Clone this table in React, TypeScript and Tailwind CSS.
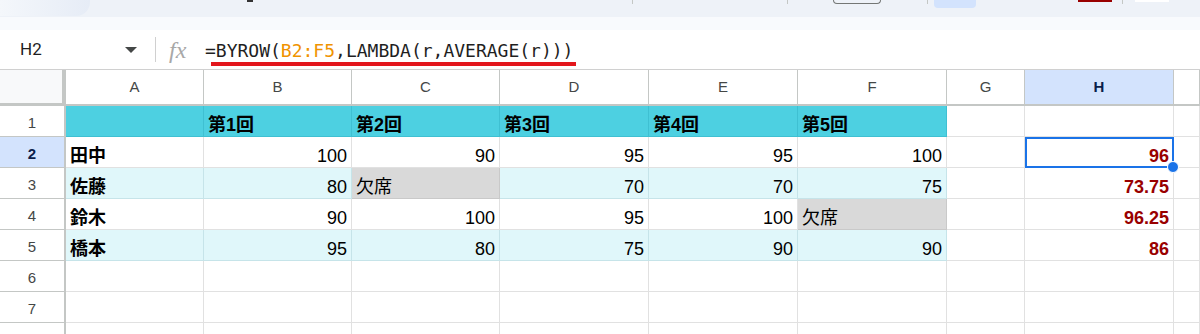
import React from 'react';

const COLS = ['A', 'B', 'C', 'D', 'E', 'F', 'G', 'H', ''];

type Cell = { v: string; kind: 'name' | 'head' | 'num' | 'absent' | 'avg' | 'empty'; fill?: 'teal' | 'cyan' | 'gray' };

const rows: Cell[][] = [
  [
    { v: '', kind: 'head', fill: 'teal' },
    { v: '第1回', kind: 'head', fill: 'teal' },
    { v: '第2回', kind: 'head', fill: 'teal' },
    { v: '第3回', kind: 'head', fill: 'teal' },
    { v: '第4回', kind: 'head', fill: 'teal' },
    { v: '第5回', kind: 'head', fill: 'teal' },
    { v: '', kind: 'empty' },
    { v: '', kind: 'empty' },
    { v: '', kind: 'empty' },
  ],
  [
    { v: '田中', kind: 'name' },
    { v: '100', kind: 'num' },
    { v: '90', kind: 'num' },
    { v: '95', kind: 'num' },
    { v: '95', kind: 'num' },
    { v: '100', kind: 'num' },
    { v: '', kind: 'empty' },
    { v: '96', kind: 'avg' },
    { v: '', kind: 'empty' },
  ],
  [
    { v: '佐藤', kind: 'name', fill: 'cyan' },
    { v: '80', kind: 'num', fill: 'cyan' },
    { v: '欠席', kind: 'absent', fill: 'gray' },
    { v: '70', kind: 'num', fill: 'cyan' },
    { v: '70', kind: 'num', fill: 'cyan' },
    { v: '75', kind: 'num', fill: 'cyan' },
    { v: '', kind: 'empty' },
    { v: '73.75', kind: 'avg' },
    { v: '', kind: 'empty' },
  ],
  [
    { v: '鈴木', kind: 'name' },
    { v: '90', kind: 'num' },
    { v: '100', kind: 'num' },
    { v: '95', kind: 'num' },
    { v: '100', kind: 'num' },
    { v: '欠席', kind: 'absent', fill: 'gray' },
    { v: '', kind: 'empty' },
    { v: '96.25', kind: 'avg' },
    { v: '', kind: 'empty' },
  ],
  [
    { v: '橋本', kind: 'name', fill: 'cyan' },
    { v: '95', kind: 'num', fill: 'cyan' },
    { v: '80', kind: 'num', fill: 'cyan' },
    { v: '75', kind: 'num', fill: 'cyan' },
    { v: '90', kind: 'num', fill: 'cyan' },
    { v: '90', kind: 'num', fill: 'cyan' },
    { v: '', kind: 'empty' },
    { v: '86', kind: 'avg' },
    { v: '', kind: 'empty' },
  ],
];

const emptyRow: Cell[] = Array.from({ length: 9 }, () => ({ v: '', kind: 'empty' as const }));
const allRows = [...rows, emptyRow, emptyRow, emptyRow];

const cellFont = { fontFamily: '"Liberation Sans", Arial, "Noto Sans CJK JP", sans-serif' };

function DataCell({ c, selected }: { c: Cell; selected?: boolean }) {
  const fill =
    c.fill === 'teal'
      ? 'bg-[#4dd0e1] border-[#3fc0d2]'
      : c.fill === 'cyan'
      ? 'bg-[#e0f7fa] border-[#c6e4e9]'
      : c.fill === 'gray'
      ? 'bg-[#d9d9d9] border-[#c9c9c9]'
      : 'bg-white border-[#e1e1e1]';
  const align = c.kind === 'num' || c.kind === 'avg' ? 'justify-end' : 'justify-start';
  const weight = c.kind === 'name' || c.kind === 'head' || c.kind === 'avg' ? 'font-bold' : 'font-normal';
  const color = c.kind === 'avg' ? 'text-[#990000]' : 'text-black';
  return (
    <div className={`relative h-[31px] border-r border-b ${fill} flex items-center pt-[7px] px-[4px] ${align}`}>
      <span className={`text-[18px] leading-none whitespace-nowrap ${weight} ${color}`} style={cellFont}>
        {c.v}
      </span>
      {selected && (
        <div className="absolute z-10 left-0 top-0 right-[-1px] bottom-[-1px] border-2 border-[#1a73e8] pointer-events-none">
          <div className="absolute right-[-7px] bottom-[-7px] w-[12px] h-[12px] rounded-full bg-[#1a73e8] border-[1.5px] border-white" />
        </div>
      )}
    </div>
  );
}

export default function App() {
  return (
    <div className="w-[1200px] h-[334px] overflow-hidden bg-white" style={cellFont}>
      {/* toolbar, cut off at the top */}
      <div className="h-[17px] bg-[#eef2f8] flex items-start overflow-hidden">
        <div className="w-[90px] h-[16px] rounded-br-[14px] bg-gradient-to-r from-[#f4f7fb] to-[#e6ecf6]" />
        <div className="ml-[157px] w-[6px] h-[2px] bg-[#333]" />
        <div className="ml-[379px] w-px h-[4px] bg-[#c4c7c5]" />
        <div className="ml-[154px] w-px h-[4px] bg-[#c4c7c5]" />
        <div className="ml-[45px] w-[48px] h-[4px] border border-t-0 border-[#747775] rounded-b-[4px]" />
        <div className="ml-[46px] w-px h-[4px] bg-[#c4c7c5]" />
        <div className="ml-[6px] w-[42px] h-[8px] bg-[#d3e3fd] rounded-b-[4px]" />
        <div className="ml-[102px] w-[34px] h-[2px] bg-[#990000]" />
        <div className="ml-[10px] w-px h-[4px] bg-[#c4c7c5]" />
        <div className="ml-[12px] w-[34px] h-[2px] bg-white" />
      </div>
      <div className="h-[13px] bg-[#f8fafd]" />

      {/* formula bar */}
      <div className="h-[40px] flex items-center border-b border-[#d0d0d0] bg-white">
        <div className="w-[121px] pl-[20px] text-[17px] text-[#1f1f1f]" style={{ fontFamily: 'Roboto, "Liberation Sans", sans-serif' }}>
          H2
        </div>
        <svg width="12" height="6" viewBox="0 0 12 6" className="ml-[4px]">
          <path d="M0 0 L12 0 L6 6 Z" fill="#444746" />
        </svg>
        <div className="ml-[18px] w-px h-[25px] bg-[#d0d0d0]" />
        <div
          className="ml-[13px] w-[36px] text-[24px] italic text-[#a8a8a8] leading-none"
          style={{ fontFamily: '"Liberation Serif", "Times New Roman", serif' }}
        >
          fx
        </div>
        <div className="relative pt-[2px]">
          <span className="text-[18px] text-[#1f1f1f] whitespace-nowrap" style={{ fontFamily: '"DejaVu Sans Mono", monospace' }}>
            =BYROW(<span className="text-[#f09300]">B2:F5</span>,LAMBDA(r,AVERAGE(r)))
          </span>
          <div className="absolute left-[6px] top-[27px] w-[365px] h-[4px] bg-[#e3161c]" />
        </div>
      </div>

      {/* grid */}
      <div className="grid grid-cols-[66px_138px_148px_148px_149px_149px_149px_78px_149px_1fr]">
        {/* column headers */}
        <div className="h-[36px] bg-[#f8f9fa] border-r-[4px] border-b-[3px] border-[#c4c7c5]" />
        {COLS.map((l, i) => (
          <div
            key={i}
            className={`h-[36px] flex items-center justify-center border-r border-b-2 border-[#c4c7c5] text-[15px] ${
              l === 'H' ? 'bg-[#d3e3fd] text-[#0b1e4a] font-bold' : 'bg-white text-[#444746]'
            }`}
          >
            {l}
          </div>
        ))}

        {allRows.map((r, ri) => (
          <React.Fragment key={ri}>
            <div
              className={`h-[31px] flex items-center justify-center border-r-2 border-b border-[#c4c7c5] text-[15px] pt-[4px] ${
                ri === 1 ? 'bg-[#d3e3fd] text-[#0b1e4a] font-bold' : 'bg-white text-[#444746]'
              }`}
            >
              {ri < 7 ? ri + 1 : ''}
            </div>
            {r.map((c, ci) => (
              <DataCell key={ci} c={c} selected={ri === 1 && ci === 7} />
            ))}
          </React.Fragment>
        ))}
      </div>
    </div>
  );
}
